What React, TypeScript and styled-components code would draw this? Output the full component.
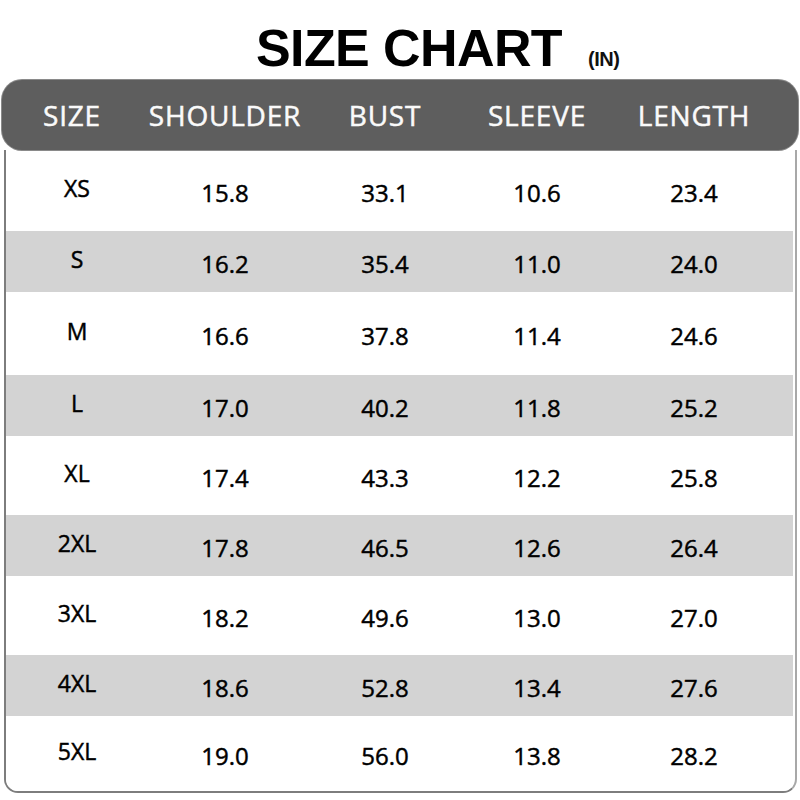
import styled, { createGlobalStyle } from 'styled-components'

const GlobalStyle = createGlobalStyle`
  html, body {
    margin: 0;
    padding: 0;
    background: #ffffff;
  }
  body {
    font-family: "Open Sans", "Noto Sans", sans-serif;
    color: #000;
  }
`

type SizeRow = {
  size: string
  shoulder: string
  bust: string
  sleeve: string
  length: string
  height: number
}

const ROWS: SizeRow[] = [
  { size: 'XS', shoulder: '15.8', bust: '33.1', sleeve: '10.6', length: '23.4', height: 81 },
  { size: 'S', shoulder: '16.2', bust: '35.4', sleeve: '11.0', length: '24.0', height: 61 },
  { size: 'M', shoulder: '16.6', bust: '37.8', sleeve: '11.4', length: '24.6', height: 83 },
  { size: 'L', shoulder: '17.0', bust: '40.2', sleeve: '11.8', length: '25.2', height: 61 },
  { size: 'XL', shoulder: '17.4', bust: '43.3', sleeve: '12.2', length: '25.8', height: 79 },
  { size: '2XL', shoulder: '17.8', bust: '46.5', sleeve: '12.6', length: '26.4', height: 61 },
  { size: '3XL', shoulder: '18.2', bust: '49.6', sleeve: '13.0', length: '27.0', height: 79 },
  { size: '4XL', shoulder: '18.6', bust: '52.8', sleeve: '13.4', length: '27.6', height: 61 },
  { size: '5XL', shoulder: '19.0', bust: '56.0', sleeve: '13.8', length: '28.2', height: 75 },
]

const HEADERS = ['SIZE', 'SHOULDER', 'BUST', 'SLEEVE', 'LENGTH']

const Page = styled.div`
  width: 800px;
  height: 800px;
  overflow: hidden;
  background: #fff;
`

const TitleRow = styled.div`
  display: flex;
  align-items: baseline;
  height: 80px;
  padding-left: 256px;
  box-sizing: border-box;
  padding-top: 22px;
`

const Title = styled.h1`
  margin: 0;
  font-family: "Liberation Sans", Arial, sans-serif;
  font-weight: 700;
  font-size: 52px;
  line-height: 1;
  letter-spacing: -0.6px;
  color: #000;
`

const Unit = styled.span`
  margin-left: 26px;
  font-family: "Liberation Sans", Arial, sans-serif;
  font-weight: 700;
  font-size: 20px;
  letter-spacing: -0.5px;
  color: #111;
`

const HeaderBar = styled.div`
  display: grid;
  grid-template-columns: 140px 166px 154px 150px 164px;
  align-items: center;
  height: 70px;
  margin: 0 2px;
  background: #5e5e5e;
  border-radius: 20px;
  box-shadow: 0 0 0 1px #8a8a8a;
  position: relative;
  z-index: 1;
`

const HeaderCell = styled.div`
  text-align: center;
  color: #fafafa;
  font-family: "Open Sans", sans-serif;
  font-weight: 400;
  font-size: 28px;
  letter-spacing: 0.8px;
  -webkit-text-stroke: 0.5px #fafafa;
`

const Body = styled.div`
  margin: 0 3px 0 4px;
  border: 2px solid #7d7d7d;
  border-right-color: #a8a8a8;
  border-top: none;
  border-radius: 0 0 14px 14px;
  overflow: hidden;
`

const Row = styled.div<{ $striped: boolean }>`
  display: grid;
  grid-template-columns: 142px 154px 166px 138px 176px;
  align-items: center;
  background: ${(p) => (p.$striped ? '#d3d3d3' : '#ffffff')};
  margin-right: 2px;
`

const SizeCell = styled.div`
  text-align: center;
  font-family: "Open Sans", sans-serif;
  font-weight: 400;
  font-size: 23px;
  -webkit-text-stroke: 0.45px #000;
  margin-top: -6px;
`

const ValueCell = styled.div`
  text-align: center;
  font-family: "Open Sans", sans-serif;
  font-weight: 400;
  font-size: 24px;
  -webkit-text-stroke: 0.45px #000;
  margin-top: 4px;
`

export default function App() {
  return (
    <Page>
      <GlobalStyle />
      <TitleRow>
        <Title>SIZE CHART</Title>
        <Unit>(IN)</Unit>
      </TitleRow>
      <HeaderBar>
        {HEADERS.map((h) => (
          <HeaderCell key={h}>{h}</HeaderCell>
        ))}
      </HeaderBar>
      <Body>
        {ROWS.map((row, i) => (
          <Row key={row.size} $striped={i % 2 === 1} style={{ height: row.height }}>
            <SizeCell>{row.size}</SizeCell>
            <ValueCell>{row.shoulder}</ValueCell>
            <ValueCell>{row.bust}</ValueCell>
            <ValueCell>{row.sleeve}</ValueCell>
            <ValueCell>{row.length}</ValueCell>
          </Row>
        ))}
      </Body>
    </Page>
  )
}
